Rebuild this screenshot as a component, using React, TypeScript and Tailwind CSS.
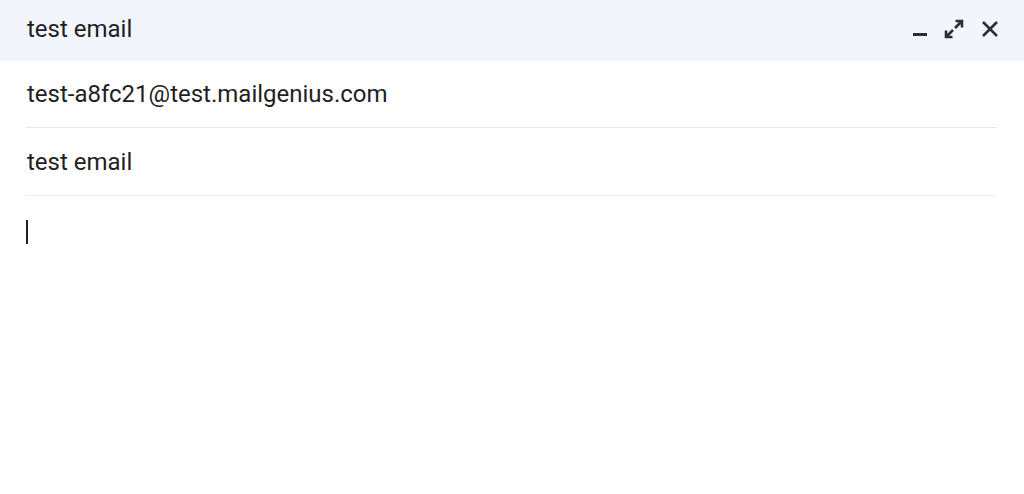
import React from "react";

export default function App() {
  return (
    <div
      className="w-[1024px] h-[494px] bg-white overflow-hidden text-[#1f1f1f]"
      style={{ fontFamily: "Roboto, 'Noto Sans', sans-serif" }}
    >
      <div className="h-[61px] bg-[#f2f6fc] flex items-center justify-between pl-[27px] pr-[24px]">
        <span className="text-[24px] leading-none -mt-[4px]">test email</span>
        <div className="flex items-center gap-[16px] -mt-[4px]">
          <svg width="16" height="18" viewBox="0 0 16 18">
            <rect x="1" y="13" width="14" height="3" fill="#2f2f2f" />
          </svg>
          <svg width="20" height="20" viewBox="0 0 20 20">
            <path
              d="M11.5 2h6.5v6.5M18 2l-7 7M8.5 18H2v-6.5M2 18l7-7"
              fill="none"
              stroke="#2f2f2f"
              strokeWidth="2.6"
            />
          </svg>
          <svg width="20" height="20" viewBox="0 0 20 20">
            <path d="M3 3l14 14M17 3L3 17" stroke="#2f2f2f" strokeWidth="2.6" fill="none" />
          </svg>
        </div>
      </div>
      <div className="mx-[26px] w-[971px]">
        <div className="h-[67px] flex items-center border-b border-[#e6e6e6] pl-[1px]">
          <span className="text-[24px] leading-none">test-a8fc21@test.mailgenius.com</span>
        </div>
        <div className="h-[68px] flex items-center border-b border-[#eeeff1] pl-[1px]">
          <span className="text-[24px] leading-none">test email</span>
        </div>
        <div className="pt-[24px]">
          <div className="w-[2px] h-[24px] bg-[#1f1f1f]" />
        </div>
      </div>
    </div>
  );
}
